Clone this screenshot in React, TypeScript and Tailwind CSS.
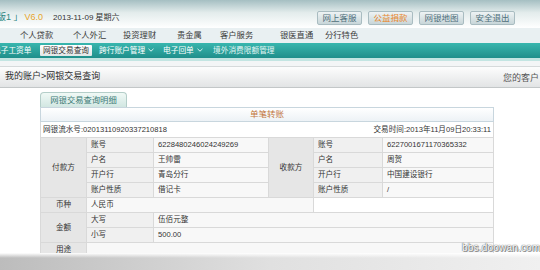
import React from 'react';

const topButtons = [
  { label: '网上客服', hot: false },
  { label: '公益捐款', hot: true },
  { label: '网银地图', hot: false },
  { label: '安全退出', hot: false },
];

const mainMenu = [
  { label: '个人贷款', w: 'w-[53px]' },
  { label: '个人外汇', w: 'w-[50px]' },
  { label: '投资理财', w: 'w-[54px]' },
  { label: '贵金属', w: 'w-[43px]' },
  { label: '客户服务', w: 'w-[60px]' },
  { label: '银医直通', w: 'w-[45px]' },
  { label: '分行特色', w: 'w-[45px]' },
];

const payer = [
  ['账号', '6228480246024249269'],
  ['户名', '王帅雷'],
  ['开户行', '青岛分行'],
  ['账户性质', '借记卡'],
];

const payee = [
  ['账号', '6227001671170365332'],
  ['户名', '周贺'],
  ['开户行', '中国建设银行'],
  ['账户性质', '/'],
];

const Caret = () => (
  <svg width="6" height="4" viewBox="0 0 6 4" className="ml-[3px] inline-block">
    <path d="M0.5 0.8 L3 3.2 L5.5 0.8" fill="none" stroke="#d8f2f0" strokeWidth="1" />
  </svg>
);

const Label = ({ children, span = '' }: { children?: React.ReactNode; span?: string }) => (
  <div className={`${span} bg-[#e6e6e6] flex items-center justify-center`}>{children}</div>
);

const Field = ({ children }: { children?: React.ReactNode }) => (
  <div className="bg-[#f0f0f0] flex items-center pl-[4px]">{children}</div>
);

const Value = ({ children, span = '', bg = 'bg-[#f8f8f8]' }: { children?: React.ReactNode; span?: string; bg?: string }) => (
  <div className={`${span} ${bg} flex items-center pl-[4px] whitespace-nowrap`}>{children}</div>
);

export default function App() {
  return (
    <div className="relative w-[540px] h-[270px] overflow-hidden bg-white text-[#333] [font-family:'Liberation_Sans','Noto_Sans_CJK_SC',sans-serif]">
      {/* top header */}
      <div className="h-[28px] bg-gradient-to-b from-[#a5bfc2] via-[#e3ecec] via-45% to-white flex items-center pt-[8px] pr-[25px] whitespace-nowrap">
        <span className="-ml-[3px] text-[9px] text-[#2b8580]">版1 」</span>
        <span className="ml-[2px] text-[9px] text-[#e6a52c]">V6.0</span>
        <span className="ml-[10px] text-[8px] text-[#333]">2013-11-09 星期六</span>
        <div className="ml-auto flex gap-[6px]">
          {topButtons.map((b) => (
            <div
              key={b.label}
              className={`w-[45px] h-[14px] rounded-[2px] border border-[#a9bcc1] bg-gradient-to-b from-[#eef3f4] to-[#c8d6d9] flex items-center justify-center text-[8.5px] ${
                b.hot ? 'text-[#e8862a]' : 'text-[#4f6f7b]'
              }`}
            >
              {b.label}
            </div>
          ))}
        </div>
      </div>

      {/* main menu */}
      <div className="h-[15px] bg-[#e9f0f2] flex items-center pl-[20px] text-[8.3px] text-[#3a3a3a] whitespace-nowrap">
        {mainMenu.map((m) => (
          <span key={m.label} className={`${m.w} shrink-0`}>
            {m.label}
          </span>
        ))}
      </div>

      {/* sub menu */}
      <div className="h-[15px] bg-gradient-to-b from-[#38b6ae] to-[#1f8f8b] flex items-center text-[7.7px] text-white whitespace-nowrap">
        <span className="-ml-[7px] w-[47px] shrink-0">电子工资单</span>
        <span className="w-[52px] h-[11px] shrink-0 bg-gradient-to-b from-white to-[#e1e6e6] text-[#333] flex items-center justify-center rounded-[1px]">
          网银交易查询
        </span>
        <span className="ml-[7px] w-[64px] shrink-0 flex items-center">
          跨行账户管理
          <Caret />
        </span>
        <span className="w-[50px] shrink-0 flex items-center">
          电子回单
          <Caret />
        </span>
        <span className="shrink-0 text-[#e2f5f3]">境外消费限额管理</span>
      </div>
      <div className="h-[3px] bg-[#c3e5e2]" />
      <div className="h-[5px] bg-[#f3f5f6]" />

      {/* breadcrumb */}
      <div className="h-[22px] border-t border-b border-t-[#d6dadb] border-b-[#c3c7c8] bg-gradient-to-b from-[#fdfdfd] to-[#e2e4e5] flex items-center whitespace-nowrap">
        <span className="-ml-[4px] text-[9px] text-[#2f2f2f]">：我的账户&gt;网银交易查询</span>
        <span className="ml-auto w-[37px] pt-[4px] text-[9px] text-[#555]">您的客户</span>
      </div>

      {/* content */}
      <div className="pl-[40px] pt-[4px]">
        <div className="w-[87px] h-[15px] rounded-t-[4px] border border-b-0 border-[#b4cec9] bg-gradient-to-b from-[#f0f9f6] to-[#d2e7e2] flex items-center justify-center text-[8.3px] text-[#3b7a75]">
          网银交易查询明细
        </div>
        <div className="w-[454px] text-[7.6px] text-[#333]">
          <div className="h-[15px] border border-[#c8d6de] bg-gradient-to-b from-white to-[#edf2f6] flex items-center justify-center text-[8.5px] text-[#c2763a]">
            单笔转账
          </div>
          <div className="h-[15px] border-x border-[#d8d8d8] bg-white flex items-center justify-between px-[2px] whitespace-nowrap">
            <span>网银流水号:02013110920337210818</span>
            <span>交易时间:2013年11月09日20:33:11</span>
          </div>
          <div className="grid grid-cols-[45px_66px_114px_44px_68px_110px] auto-rows-[14px] gap-[1px] bg-[#d9d9d9] border border-[#d9d9d9]">
            <Label span="row-span-4">付款方</Label>
            <Field>{payer[0][0]}</Field>
            <Value>{payer[0][1]}</Value>
            <Label span="row-span-4">收款方</Label>
            <Field>{payee[0][0]}</Field>
            <Value>{payee[0][1]}</Value>
            {[1, 2, 3].map((i) => (
              <React.Fragment key={i}>
                <Field>{payer[i][0]}</Field>
                <Value>{payer[i][1]}</Value>
                <Field>{payee[i][0]}</Field>
                <Value>{payee[i][1]}</Value>
              </React.Fragment>
            ))}
            <Label>币种</Label>
            <Value span="col-span-3">人民币</Value>
            <Value span="col-span-2" bg="bg-white" />
            <Label span="row-span-2">金额</Label>
            <Field>大写</Field>
            <Value span="col-span-4">伍佰元整</Value>
            <Field>小写</Field>
            <Value span="col-span-4">500.00</Value>
            <Label>用途</Label>
            <Value span="col-span-5" />
          </div>
        </div>
      </div>

      {/* watermark + bottom shading of the photo */}
      <div className="absolute left-[462px] top-[240px] text-[10px] text-white tracking-[0.2px] [text-shadow:0_0_1px_#666,0_0_1px_#666,1px_1px_0_#888]">
        bbs.doowan.com
      </div>
      <div className="absolute left-0 bottom-0 w-full h-[17px] bg-gradient-to-r from-[#bcbcbc] via-[#e0e0e0] via-50% to-[#f0f0f0]">
        <div className="h-[5px] bg-gradient-to-b from-white to-transparent" />
      </div>
    </div>
  );
}
